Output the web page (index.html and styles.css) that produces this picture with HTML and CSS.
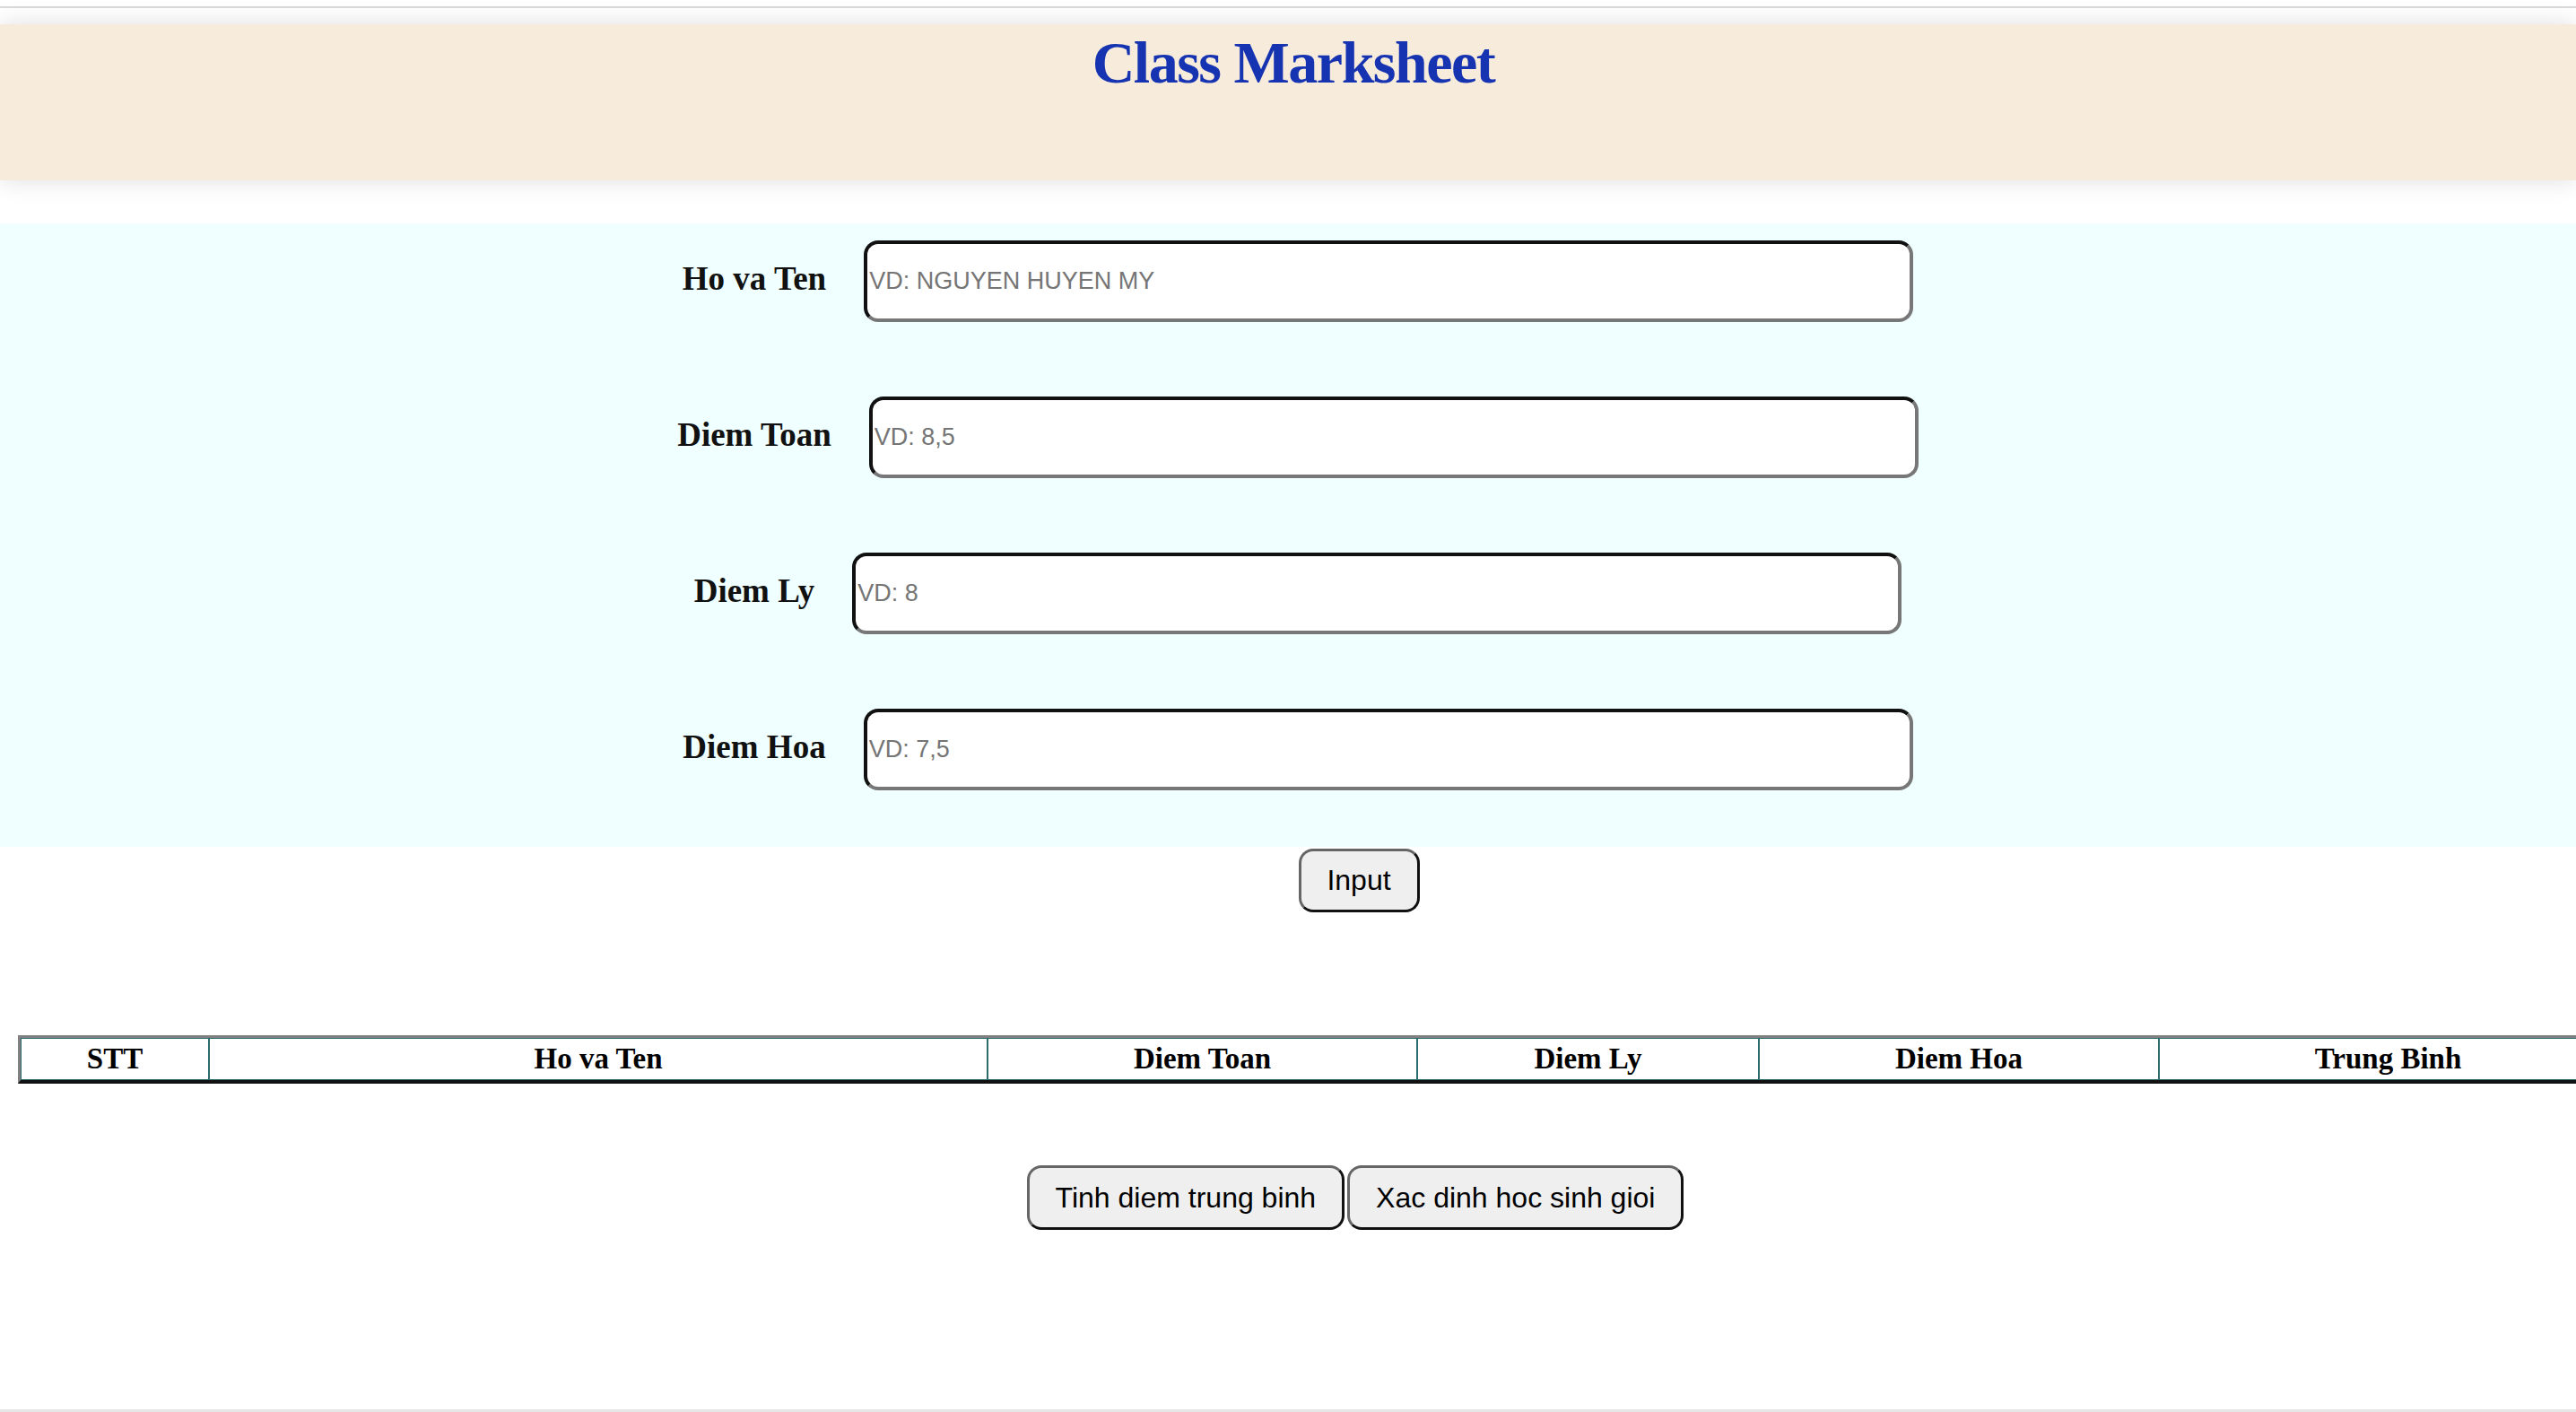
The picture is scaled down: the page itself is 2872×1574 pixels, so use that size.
FILE: index.html
```html
<!DOCTYPE html>
<html lang="vi">
<head>
<meta charset="utf-8">
<title>Class Marksheet</title>
<link rel="stylesheet" href="styles.css">
</head>
<body>
<div class="page">
  <div class="topline"></div>
  <header class="masthead">
    <h1 class="title">Class Marksheet</h1>
  </header>

  <section class="form">
    <div class="row">
      <label class="lbl" for="hoten">Ho va Ten</label>
      <input class="field" id="hoten" type="text" placeholder="VD: NGUYEN HUYEN MY">
    </div>
    <div class="row">
      <label class="lbl" for="toan">Diem Toan</label>
      <input class="field" id="toan" type="text" placeholder="VD: 8,5">
    </div>
    <div class="row">
      <label class="lbl" for="ly">Diem Ly</label>
      <input class="field" id="ly" type="text" placeholder="VD: 8">
    </div>
    <div class="row">
      <label class="lbl" for="hoa">Diem Hoa</label>
      <input class="field" id="hoa" type="text" placeholder="VD: 7,5">
    </div>
  </section>

  <div class="actions actions-input">
    <button class="btn btn-input" type="button">Input</button>
  </div>

  <div class="tablewrap">
    <table class="marks">
      <colgroup>
        <col class="c-stt">
        <col class="c-name">
        <col class="c-toan">
        <col class="c-ly">
        <col class="c-hoa">
        <col class="c-tb">
      </colgroup>
      <thead>
        <tr>
          <th>STT</th>
          <th>Ho va Ten</th>
          <th>Diem Toan</th>
          <th>Diem Ly</th>
          <th>Diem Hoa</th>
          <th>Trung Binh</th>
        </tr>
      </thead>
      <tbody></tbody>
    </table>
  </div>

  <div class="actions actions-calc">
    <button class="btn btn-calc" type="button">Tinh diem trung binh</button>
    <button class="btn btn-calc" type="button">Xac dinh hoc sinh gioi</button>
  </div>

  <div class="bottomline"></div>
</div>
</body>
</html>
```

FILE: styles.css
```css
html, body {
  margin: 0;
  padding: 0;
  background: #ffffff;
}

body {
  font-family: "Liberation Serif", "Times New Roman", serif;
  color: #111111;
}

.page {
  min-height: 100vh;
  display: flex;
  flex-direction: column;
  overflow: hidden;
}

.topline {
  height: 7px;
  border-bottom: 2px solid #d9d9d9;
  flex: none;
}

.masthead {
  margin-top: 18px;
  height: 174px;
  background: #f7ebdb;
  box-shadow: 0 0 26px rgba(0, 0, 0, 0.13);
  flex: none;
  display: flex;
  justify-content: center;
  align-items: flex-start;
}

.title {
  margin: 10px 0 0 12px;
  font-family: "Liberation Serif", "Times New Roman", serif;
  font-weight: bold;
  font-size: 66px;
  line-height: 66px;
  letter-spacing: -1.5px;
  color: #1634b1;
}

.form {
  margin-top: 48px;
  background: #f0ffff;
  padding: 19px 0 63px 22px;
  display: flex;
  flex-direction: column;
  gap: 83px;
  flex: none;
}

.row {
  display: flex;
  justify-content: center;
  align-items: center;
  gap: 42px;
}

.lbl {
  padding-bottom: 6px;
  font-family: "Liberation Serif", "Times New Roman", serif;
  font-weight: bold;
  font-size: 37px;
  color: #111111;
  white-space: nowrap;
}

.field {
  box-sizing: border-box;
  width: 1170px;
  height: 91px;
  margin: 0;
  padding: 0 0 0 2px;
  background: #ffffff;
  border-style: solid;
  border-width: 4px;
  border-color: #111111 #777777 #777777 #111111;
  border-radius: 16px;
  font-family: "Liberation Sans", Arial, sans-serif;
  font-size: 27px;
  color: #111111;
  outline: none;
}

.field::placeholder {
  color: #757575;
}

.actions {
  display: flex;
  justify-content: center;
  flex: none;
}

.actions-input {
  margin-top: 2px;
  padding-left: 158px;
}

.actions-calc {
  margin-top: 91px;
  padding-left: 150px;
  gap: 3px;
}

.btn {
  box-sizing: border-box;
  margin: 0;
  background: #efefef;
  border-style: solid;
  border-width: 3px;
  border-color: #666666 #111111 #111111 #666666;
  border-radius: 16px;
  font-family: "Liberation Sans", Arial, sans-serif;
  font-size: 32px;
  line-height: 37px;
  color: #000000;
  cursor: pointer;
}

.btn-input {
  width: 135px;
  height: 71px;
  padding: 0;
}

.btn-calc {
  height: 72px;
  padding: 0 29px;
}

.tablewrap {
  margin-top: 137px;
  padding-left: 20px;
  overflow: hidden;
  flex: none;
}

.marks {
  width: 2895px;
  table-layout: fixed;
  border-collapse: separate;
  border-spacing: 0;
  border-style: solid;
  border-width: 3px 3px 4px 3px;
  border-color: #808080 #111111 #111111 #808080;
}

.c-stt { width: 210px; }
.c-name { width: 868px; }
.c-toan { width: 479px; }
.c-ly { width: 381px; }
.c-hoa { width: 446px; }
.c-tb { width: 511px; }

.marks th {
  border: 1.5px solid #2b6b6b;
  padding: 4px 0;
  height: 36px;
  font-family: "Liberation Serif", "Times New Roman", serif;
  font-weight: bold;
  font-size: 33px;
  line-height: 37px;
  color: #000000;
  text-align: center;
  background: #ffffff;
}

.bottomline {
  margin-top: auto;
  height: 3px;
  background: #e6e6e6;
  flex: none;
}
```
